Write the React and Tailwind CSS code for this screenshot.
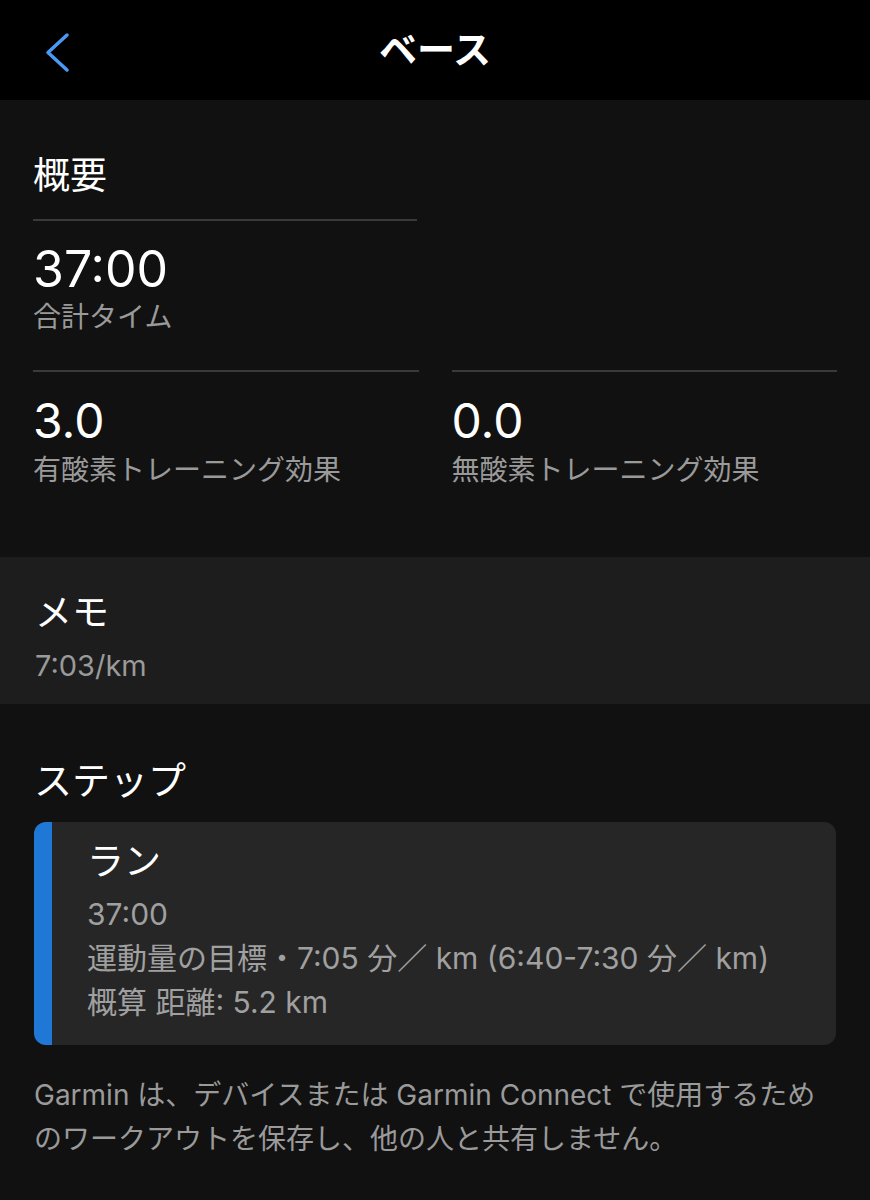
const font = { fontFamily: '"Inter", "Noto Sans CJK JP", sans-serif' }

function Divider() {
  return <div className="h-[2px] bg-[#3a3a3a]" />
}

function Stat({ value, label }) {
  return (
    <div className="flex-1">
      <Divider />
      <div className="pt-[22px] text-[48px] leading-[54px] text-white">{value}</div>
      <div className="mt-[4px] text-[28px] leading-[36px] text-[#9a9a9a]">{label}</div>
    </div>
  )
}

export default function App() {
  return (
    <div className="w-[870px] h-[1200px] bg-[#111111] overflow-hidden" style={font}>
      {/* Header */}
      <header className="relative h-[100px] bg-black flex items-center justify-center">
        <svg className="absolute left-[40px] top-[30px]" width="40" height="46" viewBox="0 0 40 46" fill="none">
          <path d="M27 5 L8 22.5 L27 40" stroke="#4a9af5" strokeWidth="3.5" strokeLinecap="round" strokeLinejoin="round" />
        </svg>
        <h1 className="text-[38px] font-bold text-white leading-none -mt-[2px]">ベース</h1>
      </header>

      {/* Summary */}
      <section className="px-[33px] pt-[53px] h-[457px]">
        <div className="text-[37px] leading-[46px] text-white">概要</div>
        <div className="w-[384px] mt-[20px]">
          <Divider />
          <div className="pt-[20px] text-[50px] leading-[56px] text-white">37:00</div>
          <div className="mt-[2px] text-[28px] leading-[36px] text-[#9a9a9a]">合計タイム</div>
        </div>
        <div className="flex gap-[33px] mt-[35px]">
          <Stat value="3.0" label="有酸素トレーニング効果" />
          <Stat value="0.0" label="無酸素トレーニング効果" />
        </div>
      </section>

      {/* Memo */}
      <section className="bg-[#1d1d1d] h-[147px] px-[35px] pt-[33px]">
        <div className="text-[37px] leading-[46px] text-white">メモ</div>
        <div className="mt-[12px] text-[29px] leading-[36px] text-[#9a9a9a]">7:03/km</div>
      </section>

      {/* Steps */}
      <section className="px-[34px] pt-[53px]">
        <div className="text-[38px] leading-[46px] text-white">ステップ</div>
        <div className="mt-[19px] flex h-[223px] rounded-[12px] overflow-hidden bg-[#262626]">
          <div className="w-[18px] bg-[#1f78d6]" />
          <div className="pl-[35px] pt-[17px]">
            <div className="text-[37px] leading-[46px] text-white">ラン</div>
            <div className="mt-[7px] text-[30px] leading-[44px] text-[#a0a0a0]">
              <div>37:00</div>
              <div>運動量の目標・7:05 分／ km (6:40-7:30 分／ km)</div>
              <div>概算 距離: 5.2 km</div>
            </div>
          </div>
        </div>
        <p className="mt-[28px] text-[28px] leading-[44px] text-[#9a9a9a]">
          Garmin は、デバイスまたは Garmin Connect で使用するため
          <br />
          のワークアウトを保存し、他の人と共有しません。
        </p>
      </section>
    </div>
  )
}
